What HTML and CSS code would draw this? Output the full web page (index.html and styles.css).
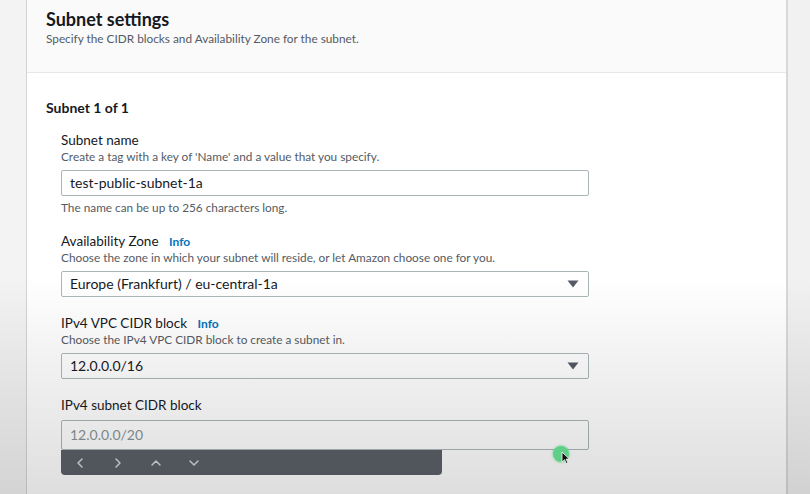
FILE: index.html
```html
<!DOCTYPE html>
<html lang="en">
<head>
<meta charset="utf-8">
<title>Subnet settings</title>
<link rel="stylesheet" href="styles.css">
</head>
<body>
<div class="page">
  <div class="gutter gutter-left"></div>
  <main class="card">
    <header class="card-head">
      <h1 class="title">Subnet settings</h1>
      <p class="subtitle">Specify the CIDR blocks and Availability Zone for the subnet.</p>
    </header>
    <section class="card-body">
      <h2 class="section-title">Subnet 1 of 1</h2>
      <div class="fields">
        <div class="field">
          <div class="label">Subnet name</div>
          <div class="desc">Create a tag with a key of 'Name' and a value that you specify.</div>
          <div class="input">test-public-subnet-1a</div>
          <div class="hint">The name can be up to 256 characters long.</div>
        </div>
        <div class="field">
          <div class="label">Availability Zone <span class="info">Info</span></div>
          <div class="desc">Choose the zone in which your subnet will reside, or let Amazon choose one for you.</div>
          <div class="input select">
            <span>Europe (Frankfurt) / eu-central-1a</span>
            <svg class="caret" width="12" height="8" viewBox="0 0 12 8"><path d="M0.5 0.5h11L6 7.5z" fill="#545b64"/></svg>
          </div>
        </div>
        <div class="field">
          <div class="label">IPv4 VPC CIDR block <span class="info">Info</span></div>
          <div class="desc">Choose the IPv4 VPC CIDR block to create a subnet in.</div>
          <div class="input select">
            <span>12.0.0.0/16</span>
            <svg class="caret" width="12" height="8" viewBox="0 0 12 8"><path d="M0.5 0.5h11L6 7.5z" fill="#545b64"/></svg>
          </div>
        </div>
        <div class="field">
          <div class="label">IPv4 subnet CIDR block</div>
          <div class="input tall placeholder">12.0.0.0/20</div>
          <div class="toolbar">
            <svg class="tb-icon" width="12" height="12" viewBox="0 0 12 12"><path d="M8 2L4 6l4 4" /></svg>
            <svg class="tb-icon" width="12" height="12" viewBox="0 0 12 12"><path d="M4 2l4 4-4 4" /></svg>
            <svg class="tb-icon" width="12" height="12" viewBox="0 0 12 12"><path d="M2 8l4-4 4 4" /></svg>
            <svg class="tb-icon" width="12" height="12" viewBox="0 0 12 12"><path d="M2 4l4 4 4-4" /></svg>
          </div>
        </div>
      </div>
    </section>
  </main>
  <div class="gutter gutter-right"></div>
</div>
<div class="vignette"></div>
<div class="click-dot"></div>
<svg class="cursor" width="9" height="13" viewBox="0 0 9 13"><path d="M1 1v10l2.5-2.3L5.3 12.5l1.6-.7-1.8-3.7H8.3z" fill="#111" stroke="#fff" stroke-width="0.8"/></svg>
</body>
</html>
```

FILE: styles.css
```css
* { box-sizing: border-box; }
html, body {
  margin: 0;
  padding: 0;
}
body {
  width: 810px;
  height: 494px;
  overflow: hidden;
  background: #f2f2f2;
  font-family: Lato, "Liberation Sans", sans-serif;
  color: #16191f;
  position: relative;
}
.page {
  display: flex;
  height: 494px;
}
.gutter-left {
  width: 26px;
  background: #f3f3f3;
}
.gutter-right {
  flex: 1;
  background: #f1f1f1;
}
.card {
  width: 762px;
  background: #fff;
  border-left: 1px solid #d4d4d4;
  border-right: 2px solid #d8d8d8;
}
.card-head {
  height: 73px;
  background: #fafafa;
  border-bottom: 1px solid #e8e8e8;
  padding: 8px 0 0 19px;
}
.title {
  margin: 0;
  font-size: 18px;
  line-height: 22px;
  font-weight: 700;
}
.subtitle {
  margin: 2px 0 0;
  font-size: 11.8px;
  line-height: 14px;
  color: #545b64;
}
.card-body {
  padding: 26px 0 0 19px;
}
.section-title {
  margin: 0;
  font-size: 14px;
  line-height: 18px;
  font-weight: 700;
}
.fields {
  padding: 14px 0 0 15px;
  display: flex;
  flex-direction: column;
  gap: 17px;
}
.field {
  width: 528px;
  display: flex;
  flex-direction: column;
}
.label {
  font-size: 13.5px;
  line-height: 18px;
  height: 18px;
}
.info {
  margin-left: 7px;
  font-size: 12px;
  line-height: 1;
  font-weight: 700;
  color: #0073bb;
}
.desc {
  margin-top: 1px;
  font-size: 11.8px;
  line-height: 14px;
  color: #545b64;
}
.input {
  margin-top: 6px;
  height: 26px;
  border: 1px solid #aab7b8;
  border-radius: 2px;
  padding: 0 8px;
  font-size: 14px;
  line-height: 24px;
  display: flex;
  align-items: center;
  justify-content: space-between;
  background: #fff;
}
.input.tall {
  height: 30px;
  line-height: 28px;
}
.placeholder {
  color: #879596;
}
.caret {
  margin-right: 1px;
}
.hint {
  margin-top: 5px;
  font-size: 11.8px;
  line-height: 14px;
  color: #545b64;
}
.toolbar {
  width: 381px;
  height: 25px;
  background: #5b6068;
  border-radius: 0 0 4px 4px;
  display: flex;
  align-items: center;
  gap: 26px;
  padding-left: 13px;
}
.tb-icon path {
  fill: none;
  stroke: #d5d8db;
  stroke-width: 1.5;
  stroke-linecap: round;
  stroke-linejoin: round;
}
.vignette {
  position: absolute;
  inset: 0;
  pointer-events: none;
  background: linear-gradient(to bottom, rgba(0,0,0,0) 0%, rgba(0,0,0,0) 56%, rgba(0,0,0,0.06) 75%, rgba(0,0,0,0.13) 100%);
}
.click-dot {
  position: absolute;
  left: 553px;
  top: 446px;
  width: 16px;
  height: 16px;
  border-radius: 50%;
  background: #5fcf88;
  box-shadow: 0 0 2px 1px rgba(95, 207, 136, 0.5);
}
.cursor {
  position: absolute;
  left: 561px;
  top: 451px;
}
```
